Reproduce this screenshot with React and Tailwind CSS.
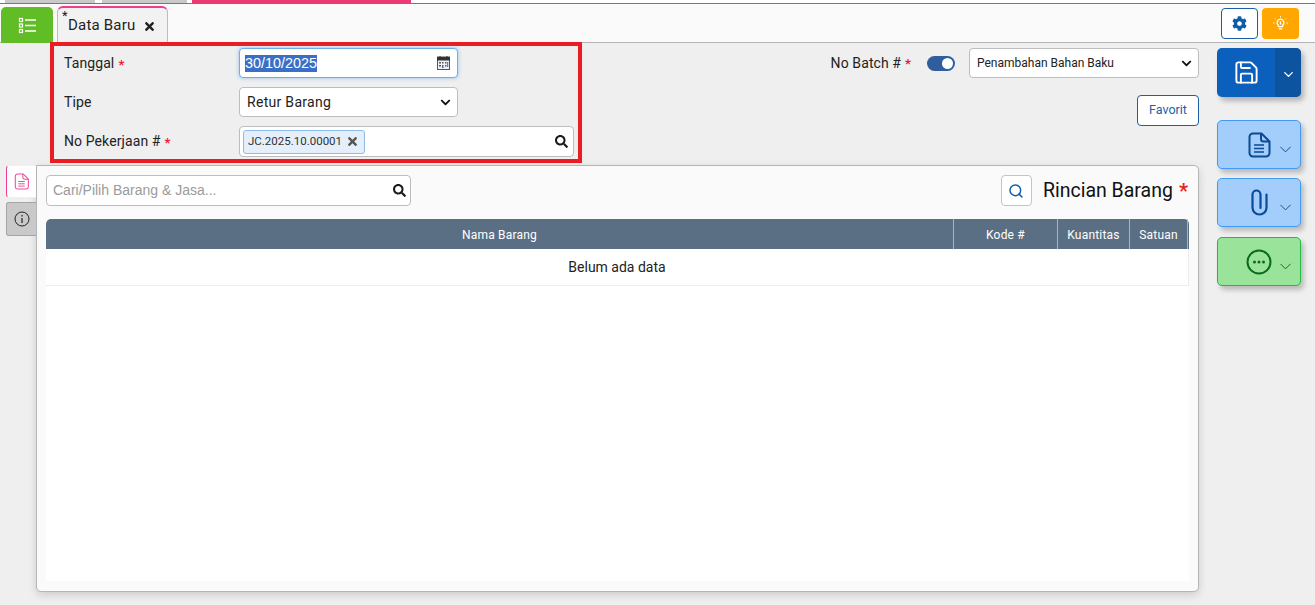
import React from "react";
import { FaTimes, FaSearch, FaChevronDown, FaCog } from "react-icons/fa";
import { Save, Search, ChevronDown } from "lucide-react";

const Star = () => <span className="text-[#f0182d] text-[13px] font-bold ml-[4px] relative top-[1px]">*</span>;

const ListIcon = () => (
  <svg width="19" height="17" viewBox="0 0 19 17" fill="none" stroke="#fff">
    <rect x="1.5" y="1.5" width="3" height="3" strokeWidth="1.2" />
    <rect x="1.5" y="7" width="3" height="3" strokeWidth="1.2" />
    <rect x="1.5" y="12.5" width="3" height="3" strokeWidth="1.2" />
    <path d="M7 3h11M7 8.5h11M7 14h11" strokeWidth="1.6" />
  </svg>
);

const CalendarIcon = () => (
  <svg width="13" height="14" viewBox="0 0 13 14">
    <rect x="0.5" y="1" width="12" height="12.5" fill="#eef0f2" stroke="#555" />
    <rect x="0" y="1" width="13" height="3.5" fill="#333" />
    <path d="M3 0v2M10 0v2" stroke="#333" />
    <path d="M2 6h2v1.5H2zM5 6h1.5v1.5H5zM8 6h1.5v1.5H8zM2 9h2v1.5H2zM8 9h1.5v1.5H8z" fill="#556" />
    <path d="M5 9h1.500v3H5zM10.200 6h1v5h-1z" fill="#3d6fb0" />
  </svg>
);

const DocIcon = ({ color = "#0b4a94", size = 26, sw = 2 }) => (
  <svg width={size} height={size} viewBox="0 0 24 26" fill="none" stroke={color} strokeWidth={sw} strokeLinejoin="round">
    <path d="M6 1.500h8.500l8 8V21a3.500 3.500 0 0 1-3.500 3.500H6A3.500 3.500 0 0 1 2.500 21V5A3.500 3.500 0 0 1 6 1.500z" />
    <path d="M14 2v5a2.500 2.500 0 0 0 2.500 2.500H22" />
    <path d="M7 13h10M7 16.500h10M7 20h10" strokeWidth="1.500" />
  </svg>
);

const ClipIcon = () => (
  <svg width="19" height="27" viewBox="0 0 19 27" fill="none" stroke="#0b4a94" strokeWidth="2.2" strokeLinecap="round">
    <path d="M16.500 5.500V18.500a7 7 0 0 1-14 0V5.500a4 4 0 0 1 8 0V19" />
  </svg>
);

const MoreIcon = () => (
  <svg width="26" height="26" viewBox="0 0 26 26" fill="none">
    <circle cx="13" cy="13" r="11.500" stroke="#0a6b16" strokeWidth="2" />
    <circle cx="8.500" cy="13" r="1.500" fill="#0a6b16" />
    <circle cx="13" cy="13" r="1.500" fill="#0a6b16" />
    <circle cx="17.500" cy="13" r="1.500" fill="#0a6b16" />
  </svg>
);

const BulbIcon = () => (
  <svg width="15" height="15" viewBox="0 0 14 14" fill="none" stroke="#fff" strokeWidth="1.2">
    <path d="M7 3a3.200 3.200 0 0 0-2 5.700V10h4V8.700A3.200 3.200 0 0 0 7 3z" />
    <path d="M5.500 12h3M7 5v3" />
    <path d="M7 0v1.500M1.500 2l1 1M12.500 2l-1 1M0 6.500h1.500M12.500 6.500H14" strokeWidth="0.800" />
  </svg>
);

const InfoIcon = () => (
  <svg width="16" height="16" viewBox="0 0 16 16" fill="none" stroke="#222">
    <circle cx="8" cy="8" r="7" />
    <path d="M8 7v5M8 4v1.500" strokeWidth="1.200" />
  </svg>
);

const Row = ({ label, star, children, className = "" }) => (
  <div className={`flex items-center ${className}`}>
    <div className="w-[185px] pl-[10px] text-[14px] text-[#222] tracking-[0.1px]">
      {label}
      {star && <Star />}
    </div>
    {children}
  </div>
);

const ActionButton = ({ className, icon, chev }) => (
  <div className={`relative w-[84px] h-[49px] rounded-[5px] border flex items-center justify-center shadow-[3px_4px_5px_rgba(0,0,0,0.22)] ${className}`}>
    {icon}
    <ChevronDown size={19} strokeWidth={1.2} color={chev} className="absolute right-[5px] top-[19px]" />
  </div>
);

export default function App() {
  return (
    <div
      className="w-[1315px] h-[605px] overflow-hidden bg-[#efefef] flex flex-col text-[#222]"
      style={{ fontFamily: "Roboto, 'Liberation Sans', sans-serif" }}
    >
      {/* browser-like strip */}
      <div className="h-[4px] shrink-0 flex border-b border-[#e0446f] bg-white">
        <div className="w-[5px]" />
        <div className="w-[90px] h-[3px] bg-[#c9c9c9]" />
        <div className="w-[7px]" />
        <div className="w-[85px] h-[3px] bg-[#c9c9c9]" />
        <div className="w-[5px]" />
        <div className="w-[219px] h-[3px] bg-[#ee3a72]" />
      </div>

      {/* header */}
      <div className="h-[39px] shrink-0 bg-[#fafafa] border-b border-[#b4b4b4] flex items-end relative z-0">
        <div className="ml-[1px] w-[52px] h-[36px] mb-[-1px] bg-[#61bd26] rounded-t-[5px] flex items-center justify-center">
          <ListIcon />
        </div>
        <div className="relative ml-[4px] w-[111px] h-[37px] mb-[-1px] bg-[#f2f2f2] border border-[#bdbdbd] border-b-0 border-t-2 border-t-[#ec3d8e] rounded-t-[6px] flex items-center pl-[10px] gap-[8px] text-[15px] tracking-[0.2px]">
          <span className="absolute left-[4px] top-[1px] text-[13px] leading-none">*</span>
          <span>Data Baru</span>
          <FaTimes size={13} className="text-[#222] mt-[2px]" />
        </div>
        <div className="ml-auto mr-[16px] mb-[3px] flex gap-[4px]">
          <div className="w-[37px] h-[31px] bg-white border border-[#1c5ea8] rounded-[4px] flex items-center justify-center">
            <FaCog size={15} className="text-[#0f5da8]" />
          </div>
          <div className="w-[37px] h-[31px] bg-[#ffa700] rounded-[4px] flex items-center justify-center">
            <BulbIcon />
          </div>
        </div>
      </div>

      {/* body */}
      <div className="flex-1 flex">
        <div className="w-[1199px] shrink-0 flex flex-col">
          {/* form */}
          <div className="flex items-start h-[123px]">
            <div className="relative z-10 ml-[50px] mt-[-1px] w-[532px] h-[121px] border-4 border-[#ea1c24] pt-[2px] pl-0 flex flex-col">
              <Row label="Tanggal" star>
                <div className="w-[219px] h-[30px] bg-white border border-[#6eaee8] rounded-[4px] shadow-[0_0_4px_rgba(80,160,240,0.6)] flex items-center pl-[5px] pr-[7px] justify-between" style={{ fontFamily: "'Liberation Sans', sans-serif" }}>
                  <span className="bg-[#3a6fc8] text-white text-[14.4px] leading-[17px]">30/10/2025</span>
                  <CalendarIcon />
                </div>
              </Row>
              <Row label="Tipe" className="mt-[9px]">
                <div className="w-[219px] h-[30px] bg-white border border-[#bdbdbd] rounded-[4px] flex items-center pl-[7px] pr-[6px] justify-between text-[14px] tracking-[0.3px]">
                  <span>Retur Barang</span>
                  <FaChevronDown size={11} className="text-[#111]" />
                </div>
              </Row>
              <Row label="No Pekerjaan #" star className="mt-[9px]">
                <div className="w-[335px] h-[31px] bg-white border border-[#bdbdbd] rounded-[4px] flex items-center pl-[3px] pr-[5px] justify-between">
                  <div className="h-[24px] w-[122px] bg-[#e4effb] border border-[#8dbcea] rounded-[3px] flex items-center pl-[4px] gap-[4px] text-[11.5px] text-[#333]">
                    <span>JC.2025.10.00001</span>
                    <FaTimes size={13} className="text-[#555]" />
                  </div>
                  <FaSearch size={13} className="text-[#1b1b1b]" />
                </div>
              </Row>
            </div>

            <div className="flex-1 flex flex-col items-end pt-[5px]">
              <div className="flex items-center">
                <span className="text-[14px] tracking-[0.1px]">No Batch #</span>
                <Star />
                <div className="ml-[16px] w-[28px] h-[15px] bg-[#2f5d9e] rounded-full relative">
                  <div className="absolute right-[2px] top-[2px] w-[11px] h-[11px] bg-white rounded-full" />
                </div>
                <div className="ml-[14px] w-[230px] h-[30px] bg-white border border-[#bdbdbd] rounded-[4px] flex items-center pl-[7px] pr-[6px] justify-between text-[12px]">
                  <span>Penambahan Bahan Baku</span>
                  <FaChevronDown size={11} className="text-[#111]" />
                </div>
              </div>
              <div className="mt-[17px] w-[62px] h-[31px] bg-white border border-[#1c5ea8] rounded-[4px] flex items-center justify-center text-[12.5px] text-[#1c5ea8]">
                Favorit
              </div>
            </div>
          </div>

          {/* detail area */}
          <div className="flex items-start mt-[-1px]">
            <div className="ml-[6px] w-[30px] flex flex-col relative z-10">
              <div className="h-[33px] bg-white border border-r-0 border-[#f0f0f0] border-l-[#ec3d8e] rounded-l-[4px] flex items-center justify-center">
                <DocIcon color="#ec4a9c" size={17} sw={1.6} />
              </div>
              <div className="mt-[4px] h-[34px] bg-[#c9c9c9] border border-r-0 border-[#a5a5a5] rounded-l-[3px] flex items-center justify-center">
                <InfoIcon />
              </div>
            </div>
            <div className="w-[1163px] h-[427px] bg-[#fafafa] border border-[#b5b5b5] rounded-[5px] rounded-tl-none shadow-[0_3px_8px_rgba(0,0,0,0.15)] px-[9px] pt-[9px]">
              <div className="flex items-center h-[31px]">
                <div className="w-[365px] h-[31px] bg-white border border-[#bdbdbd] rounded-[4px] flex items-center justify-between pl-[6px] pr-[4px] text-[14px] text-[#9b9b9b]" style={{ fontFamily: "'Liberation Sans', sans-serif" }}>
                  <span>Cari/Pilih Barang &amp; Jasa...</span>
                  <FaSearch size={13} className="text-[#1b1b1b]" />
                </div>
                <div className="ml-auto w-[31px] h-[31px] bg-white border border-[#c4c4c4] rounded-[4px] flex items-center justify-center">
                  <Search size={16} strokeWidth={2.2} color="#0f5da8" />
                </div>
                <div className="ml-[11px] text-[19.5px] text-[#111] leading-none whitespace-nowrap">Rincian Barang</div>
                <span className="ml-[6px] mr-[1px] text-[#f01b1b] text-[20px] font-bold leading-none">*</span>
              </div>
              <div className="mt-[13px] w-[1143px] h-[362px] bg-white">
                <div className="h-[30px] bg-[#5b6f84] rounded-t-[5px] grid grid-cols-[908px_104px_72px_58px_1px] items-center text-[12px] text-white text-center tracking-[0.2px]">
                  <div className="h-full flex items-center justify-center pt-[1px] border-r border-[#a9b4bf]">Nama Barang</div>
                  <div className="h-full flex items-center justify-center pt-[1px] border-r border-[#a9b4bf]">Kode #</div>
                  <div className="h-full flex items-center justify-center pt-[1px] border-r border-[#a9b4bf]">Kuantitas</div>
                  <div className="h-full flex items-center justify-center pt-[1px] border-r border-[#a9b4bf]">Satuan</div>
                </div>
                <div className="h-[37px] border-b border-[#ececec] border-r flex items-center justify-center pt-[1px] text-[14px] text-[#222]">
                  Belum ada data
                </div>
              </div>
            </div>
          </div>
        </div>

        {/* actions */}
        <div className="ml-[18px] flex flex-col mt-[5px]">
          <div className="relative w-[84px] h-[49px] rounded-[5px] bg-[#0b5fbd] flex shadow-[3px_4px_5px_rgba(0,0,0,0.25)] overflow-hidden">
            <div className="w-[58px] flex items-center justify-center">
              <Save size={27} strokeWidth={1.7} color="#fff" />
            </div>
            <div className="flex-1 bg-[#0c549f] flex items-center justify-center">
              <ChevronDown size={15} strokeWidth={2.2} color="#fff" className="mt-[4px]" />
            </div>
          </div>
          <ActionButton className="mt-[23px] bg-[#a3cdfa] border-[#3f9bf5]" chev="#0b4a94" icon={<DocIcon />} />
          <ActionButton className="mt-[9px] bg-[#a3cdfa] border-[#3f9bf5]" chev="#0b4a94" icon={<ClipIcon />} />
          <ActionButton className="mt-[10px] bg-[#99e39b] border-[#20bb40]" chev="#0a6b16" icon={<MoreIcon />} />
        </div>
      </div>
    </div>
  );
}
